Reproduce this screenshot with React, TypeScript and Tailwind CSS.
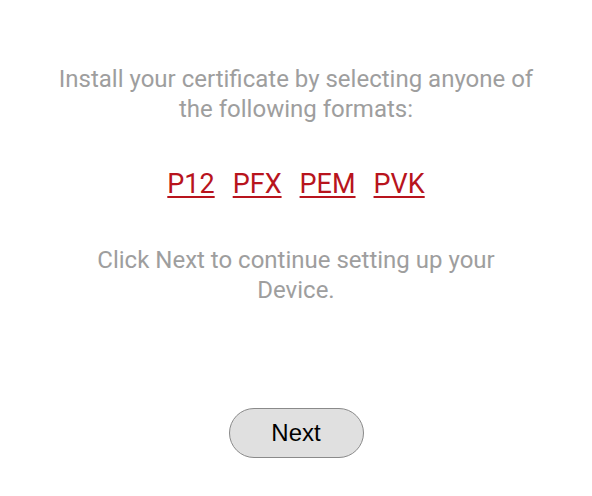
import React from "react";

export default function App() {
  return (
    <div className="w-[592px] h-[496px] bg-white flex flex-col items-center" style={{ fontFamily: "Roboto, sans-serif" }}>
      <p className="mt-[64px] px-[50px] text-center text-[24px] leading-[30px] text-[#9e9e9e]">
        Install your certificate by selecting anyone of the following formats:
      </p>
      <div className="mt-[45px] flex gap-[18px] text-[27px] leading-[30px] text-[#b8141d]">
        <a className="underline underline-offset-[3px]" href="#">P12</a>
        <a className="underline underline-offset-[3px]" href="#">PFX</a>
        <a className="underline underline-offset-[3px]" href="#">PEM</a>
        <a className="underline underline-offset-[3px]" href="#">PVK</a>
      </div>
      <p className="mt-[46px] w-[420px] text-center text-[24px] leading-[30px] text-[#9e9e9e]">
        Click Next to continue setting up your Device.
      </p>
      <button
        className="mt-[103px] w-[135px] h-[50px] rounded-full border border-[#8a8a8a] bg-[#e0e0e0] text-[24px] text-black"
        style={{ fontFamily: "'Liberation Sans', Arial, sans-serif" }}
      >
        Next
      </button>
    </div>
  );
}
